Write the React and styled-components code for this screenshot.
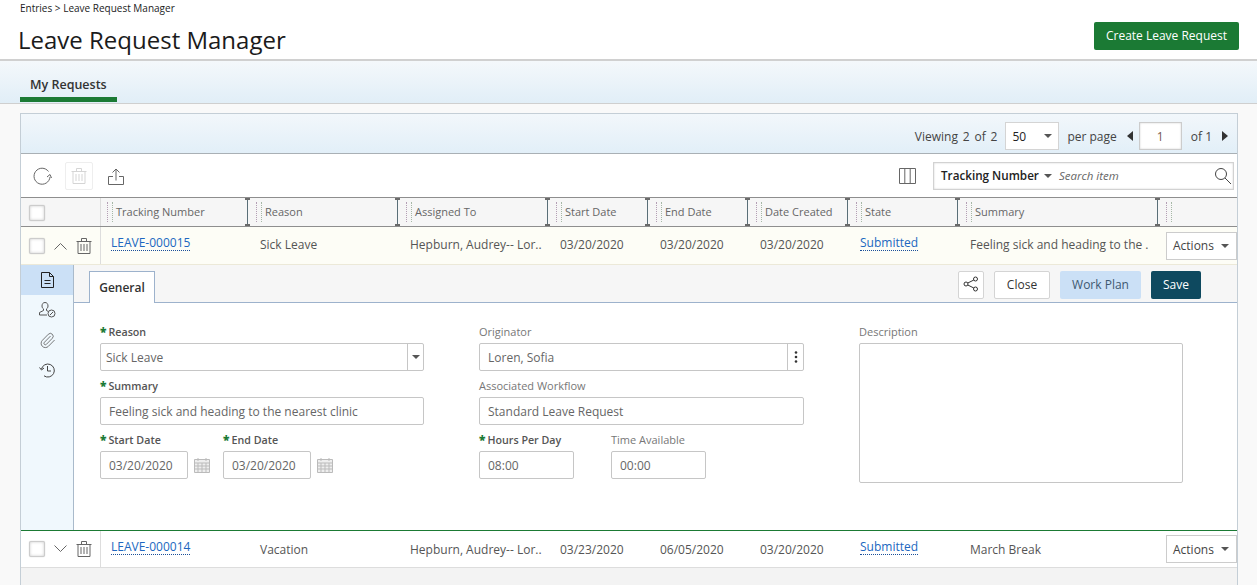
import React from 'react';
import styled, { createGlobalStyle } from 'styled-components';
import { Paperclip } from 'lucide-react';

const GlobalStyle = createGlobalStyle`
  html, body {
    margin: 0;
    height: 585px;
    overflow: hidden;
    background: #f9f9f9;
    font-family: "Open Sans", "Liberation Sans", sans-serif;
    color: #333;
  }
  * { box-sizing: border-box; }
`;

const COLUMNS = '80px 147px 150px 150px 100px 100px 100px 110px 200px 1fr';

const Header = styled.header`
  height: 61px;
  background: #fff;
  border-bottom: 2px solid #d0d0d0;
  padding: 0 18px 0 18px;
  display: flex;
  justify-content: space-between;
`;
const Crumbs = styled.div`
  font-size: 10px;
  line-height: 12px;
  padding: 2px 0 0 2px;
  color: #222;
`;
const Title = styled.h1`
  font-size: 24px;
  line-height: 33px;
  font-weight: 400;
  margin: 9px 0 0;
  color: #1b1b1b;
`;
const CreateButton = styled.button`
  height: 28px;
  width: 145px;
  margin-top: 22px;
  padding: 0 0 2px;
  background: #1b7a34;
  color: #fff;
  border: 0;
  border-radius: 2px;
  font: 400 12px "Open Sans", sans-serif;
`;
const TabBand = styled.nav`
  height: 43px;
  padding: 0 20px;
  background: linear-gradient(#f4f8fb, #e1eef7);
  border-bottom: 1px solid #cfcfcf;
`;
const Tab = styled.div`
  width: 97px;
  height: 41px;
  padding: 15px 0 0 10px;
  border-bottom: 5px solid #1b7a34;
  font-size: 12.5px;
  line-height: 17px;
  font-weight: 600;
  color: #333;
`;
const Panel = styled.section`
  margin: 9px 19px 0 20px;
  border: 1px solid #c4ced6;
  border-bottom: 0;
  background: #fff;
`;
const PagerBar = styled.div`
  height: 40px;
  padding: 5px 9px 0 0;
  background: linear-gradient(#f2f7fb, #e2eff8);
  border-bottom: 1px solid #a9b0b5;
  display: flex;
  align-items: center;
  justify-content: flex-end;
  font-size: 12px;
  color: #444;
`;
const PagerText = styled.span`
  word-spacing: ${({ $spread }) => $spread || 0}px;
  white-space: pre;
`;
const PageSize = styled.div`
  width: 54px;
  height: 28px;
  margin: 0 8px 0 8px;
  padding: 0 6px;
  background: #fff;
  border: 1px solid #d4d4d4;
  display: flex;
  align-items: center;
  justify-content: space-between;
  color: #222;
`;
const Caret = styled.i`
  width: 0;
  height: 0;
  display: block;
  margin: ${({ $margin }) => $margin || '0'};
  border-left: 4px solid transparent;
  border-right: 4px solid transparent;
  border-top: 4px solid #555;
`;
const Arrow = styled.i`
  width: 0;
  height: 0;
  display: block;
  margin: ${({ $margin }) => $margin || '0'};
  border-top: 5px solid transparent;
  border-bottom: 5px solid transparent;
  ${({ $left }) => ($left ? 'border-right: 6px solid #333;' : 'border-left: 6px solid #333;')}
`;
const PageInput = styled.div`
  width: 43px;
  height: 28px;
  margin: 0 9px 0 6px;
  background: #fff;
  border: 1px solid #ccc;
  box-shadow: inset 0 0 2px #ccc;
  display: flex;
  align-items: center;
  justify-content: center;
  color: #7a5a50;
`;
const Toolbar = styled.div`
  height: 43px;
  padding: 8px 3px 0 7px;
  display: flex;
  align-items: flex-start;
`;
const ToolIcon = styled.div`
  width: ${({ $width }) => $width || 28}px;
  height: 28px;
  margin-right: ${({ $gap }) => $gap || 0}px;
  display: flex;
  align-items: center;
  justify-content: center;
  ${({ $boxed }) => $boxed && 'border: 1px solid #eee; border-radius: 2px;'}
`;
const Spacer = styled.div`
  flex: 1;
`;
const SearchBox = styled.div`
  width: 301px;
  height: 28px;
  margin-left: 12px;
  padding: 0 1px 0 7px;
  border: 1px solid #d2d2d2;
  box-shadow: inset 0 0 2px #ccc;
  display: flex;
  align-items: center;
`;
const SearchField = styled.span`
  font-size: 11.7px;
  font-weight: 600;
  color: #222;
  margin-top: -2px;
`;
const SearchHint = styled.span`
  flex: 1;
  margin: -2px 0 0 7px;
  font-size: 11.5px;
  font-style: italic;
  color: #666;
`;
const HeadRow = styled.div`
  display: grid;
  grid-template-columns: ${COLUMNS};
  height: 30px;
  background: #f6f6f6;
  border-top: 1px solid #8e8e8e;
  border-bottom: 1px solid #8e8e8e;
`;
const HeadFirst = styled.div`
  padding: 7px 0 0 8px;
  border-right: 1px solid #ddd;
`;
const HeadCell = styled.div`
  position: relative;
  padding-left: 17px;
  font-size: 11px;
  line-height: 28px;
  color: #666;
  white-space: nowrap;
  &::before {
    content: '';
    position: absolute;
    left: 8px;
    top: 4px;
    bottom: 4px;
    width: 4px;
    border-left: 1px dotted #b49fb4;
    border-right: 1px dotted #a6b8a6;
  }
  &:nth-child(2) { padding-left: 15px; }
  &:nth-child(2)::before { left: 6px; }
`;
const Resizer = styled.span`
  position: absolute;
  right: 0;
  top: 0;
  bottom: 0;
  width: 1px;
  background: #5a6f78;
  &::before, &::after {
    content: '';
    position: absolute;
    left: -2px;
    width: 5px;
    height: 2px;
    background: #6a6a6a;
  }
  &::before { top: 0; }
  &::after { bottom: 0; }
`;
const Cell = styled.div`
  padding-left: ${({ $pad }) => $pad ?? 12}px;
  display: flex;
  align-items: center;
  white-space: nowrap;
  overflow: hidden;
`;
const TrackLink = styled.a`
  color: #2067c0;
  border-bottom: 1px dotted #1a4f99;
  line-height: 15px;
  margin-top: -4px;
`;
const Row = styled.div`
  display: grid;
  grid-template-columns: ${COLUMNS};
  height: ${({ $height }) => $height}px;
  background: ${({ $open }) => ($open ? '#fdfdf6' : '#fff')};
  border-bottom: 1px solid ${({ $open }) => ($open ? '#ece9d8' : '#ddd')};
  font-size: 12px;
  color: #555;
  ${Cell} {
    padding-bottom: ${({ $open }) => ($open ? 2 : 0)}px;
  }
  ${TrackLink} {
    margin-top: ${({ $open }) => ($open ? -4 : -5)}px;
  }
`;
const RowControls = styled.div`
  display: flex;
  align-items: center;
  padding-left: 8px;
  gap: 9px;
  border-right: 1px solid #ddd;
`;
const Check = styled.span`
  display: block;
  width: 16px;
  height: 16px;
  background: #fff;
  border: 1px solid #ccc;
  border-radius: 2px;
  box-shadow: inset 0 0 3px #ccc, 0 0 1px #bbb;
`;
const ActionCell = styled.div`
  display: flex;
  align-items: center;
  justify-content: flex-end;
`;
const ActionButton = styled.div`
  width: 71px;
  height: 28px;
  padding: 0 7px 0 6px;
  background: #fff;
  border: 1px solid #ccc;
  display: flex;
  align-items: center;
  justify-content: space-between;
  color: #444;
`;
const Detail = styled.div`
  display: flex;
  height: 266px;
  border-bottom: 1px solid #1b7a34;
`;
const SideRail = styled.aside`
  width: 53px;
  background: #f0f8fd;
  border-right: 1px solid #a9bacb;
`;
const RailItem = styled.div`
  height: 30px;
  display: flex;
  align-items: center;
  justify-content: center;
  background: ${({ $active }) => ($active ? '#cbe0f6' : 'transparent')};
`;
const DetailMain = styled.div`
  flex: 1;
  min-width: 0;
`;
const TabStrip = styled.div`
  height: 38px;
  padding: 6px 36px 0 15px;
  background: #f6f6f6;
  border-bottom: 1px solid #9db2cc;
  display: flex;
  gap: 10px;
`;
const DetailTab = styled.div`
  width: 66px;
  height: 32px;
  margin-right: auto;
  background: #fff;
  border: 1px solid #9db2cc;
  border-bottom: 0;
  text-align: center;
  font-size: 12px;
  font-weight: 600;
  line-height: 32px;
  color: #333;
`;
const FormButton = styled.button`
  height: 28px;
  width: ${({ $width }) => $width}px;
  padding: 0 0 2px;
  background: ${({ $bg }) => $bg || '#fff'};
  color: ${({ $fg }) => $fg || '#333'};
  border: ${({ $bg }) => ($bg ? '0' : '1px solid #d4d4d4')};
  border-radius: 2px;
  font: 400 12px "Open Sans", sans-serif;
  display: flex;
  align-items: center;
  justify-content: center;
`;
const Form = styled.div`
  padding: 21px 0 0 26px;
  display: grid;
  grid-template-columns: 324px 325px 324px;
  column-gap: 55px;
`;
const FormColumn = styled.div`
  display: flex;
  flex-direction: column;
`;
const Field = styled.div`
  width: ${({ $width }) => ($width ? `${$width}px` : 'auto')};
  margin-bottom: 7px;
`;
const FieldRow = styled.div`
  display: flex;
  gap: ${({ $gap }) => $gap}px;
`;
const Label = styled.label`
  display: block;
  height: 19px;
  font-size: ${({ $required }) => ($required ? 10.7 : 11)}px;
  line-height: 16px;
  white-space: nowrap;
  color: ${({ $required }) => ($required ? '#555' : '#777')};
  font-weight: ${({ $required }) => ($required ? 600 : 400)};
`;
const Star = styled.b`
  color: #1b7a34;
  font-size: 12px;
  margin-right: 2px;
`;
const Input = styled.div`
  width: ${({ $width }) => ($width ? `${$width}px` : '100%')};
  height: ${({ $height }) => $height || 28}px;
  padding-left: ${({ $pad }) => $pad || 8}px;
  background: #fff;
  border: 1px solid #c6c6c6;
  border-radius: 2px;
  font-size: 12px;
  color: #666;
  display: flex;
  align-items: center;
`;
const InputText = styled.span`
  flex: 1;
`;
const InputAddon = styled.span`
  width: 16px;
  height: 100%;
  margin-left: auto;
  border-left: 1px solid #c6c6c6;
  display: flex;
  align-items: center;
  justify-content: center;
  color: #333;
`;
const DateWrap = styled.div`
  display: flex;
  align-items: center;
  gap: 6px;
`;
const Footer = styled.div`
  height: 20px;
  background: #f3f3f3;
`;

const stroke = { fill: 'none', stroke: '#666', strokeWidth: 1 };

const Trash = ({ color = '#666' }) => (
  <svg width="16" height="16" viewBox="0 0 16 16" fill="none" stroke={color}>
    <path d="M.5 3.500h15M5.500 3.500v-3h5v3M2 3.500v12h12v-12M5 6v7M8 6v7M11 6v7" />
  </svg>
);
const Refresh = () => (
  <svg width="20" height="20" viewBox="0 0 20 20" {...stroke}>
    <path d="M16.500 5.500A8 8 0 1 0 18 11" />
    <path d="M15 11l3-2.500 1.500 3.500" />
  </svg>
);
const Share = () => (
  <svg width="16" height="17" viewBox="0 0 16 17" {...stroke}>
    <path d="M5 8.500H.5v8h15v-8H11M8 12.500V1M4.500 4.500L8 1l3.500 3.500" />
  </svg>
);
const ColumnsIcon = () => (
  <svg width="17" height="16" viewBox="0 0 17 16" {...stroke}>
    <path d="M.5.500h16v15H.5zM5.800.500v15M11.200.500v15" />
  </svg>
);
const SearchIcon = () => (
  <svg width="18" height="18" viewBox="0 0 18 18" fill="none" stroke="#444">
    <circle cx="7" cy="7" r="5.500" />
    <path d="M11 11l6 6" />
  </svg>
);
const ChevUp = () => (
  <svg width="13" height="8" viewBox="0 0 13 8" {...stroke}>
    <path d="M.5 7.500L6.500 1.500l6 6" />
  </svg>
);
const ChevDown = () => (
  <svg width="13" height="8" viewBox="0 0 13 8" {...stroke}>
    <path d="M.5.500L6.500 6.500l6-6" />
  </svg>
);
const DocIcon = () => (
  <svg width="13" height="16" viewBox="0 0 13 16" fill="none" stroke="#222">
    <path d="M.5.500h8l4 4v11H.5zM8.500.500v4h4M3.500 8.500h6M3.500 11.500h6" />
  </svg>
);
const UserIcon = () => (
  <svg width="17" height="16" viewBox="0 0 17 16" fill="none" stroke="#555">
    <path d="M6 .500c2 0 3 1.500 3 3.500 0 1.500-.8 2.500-1.500 3v1.500l1.500.8M6 .500c-2 0-3 1.500-3 3.500 0 1.500.8 2.500 1.500 3v1.500L.5 10.500v2.500h7.500" />
    <circle cx="12.500" cy="11.500" r="3.500" />
    <path d="M11 13l3-3" />
  </svg>
);
const HistoryIcon = () => (
  <svg width="16" height="16" viewBox="0 0 16 16" fill="none" stroke="#444">
    <path d="M2.500 7A6.500 6.500 0 1 1 5 13.800M.5 5.500l2 2.500L5 6M8.500 4v5H12" />
  </svg>
);
const NetworkIcon = () => (
  <svg width="16" height="16" viewBox="0 0 16 16" fill="none" stroke="#333">
    <circle cx="3" cy="8" r="2" />
    <circle cx="12.500" cy="3" r="2" />
    <circle cx="12.500" cy="13" r="2" />
    <path d="M4.800 7l6-3M4.800 9l6 3" />
  </svg>
);
const CalendarIcon = () => (
  <svg width="16" height="16" viewBox="0 0 16 16" fill="#eee" stroke="#bbb">
    <path d="M.5 2.500h15v13H.5zM.5 6h15M.5 9h15M.5 12h15M4 6v9.500M8 6v9.500M12 6v9.500M4 1v3M12 1v3" />
  </svg>
);
const DotsIcon = () => (
  <svg width="4" height="14" viewBox="0 0 4 14" fill="#333">
    <circle cx="2" cy="2.500" r="1.300" />
    <circle cx="2" cy="7" r="1.300" />
    <circle cx="2" cy="11.500" r="1.300" />
  </svg>
);

const HEADS = ['Tracking Number', 'Reason', 'Assigned To', 'Start Date', 'End Date', 'Date Created', 'State', 'Summary'];

const RequestRow = ({ open, height, id, reason, start, end, summary }) => (
  <Row $open={open} $height={height}>
    <RowControls>
      <Check />
      {open ? <ChevUp /> : <ChevDown />}
      <Trash />
    </RowControls>
    <Cell $pad={10}>
      <TrackLink>{id}</TrackLink>
    </Cell>
    <Cell>{reason}</Cell>
    <Cell>Hepburn, Audrey-- Lor..</Cell>
    <Cell>{start}</Cell>
    <Cell>{end}</Cell>
    <Cell>03/20/2020</Cell>
    <Cell>
      <TrackLink>Submitted</TrackLink>
    </Cell>
    <Cell>{summary}</Cell>
    <ActionCell>
      <ActionButton>
        Actions
        <Caret />
      </ActionButton>
    </ActionCell>
  </Row>
);

const FormField = ({ label, required, width, children }) => (
  <Field $width={width}>
    <Label $required={required}>
      {required && <Star>*</Star>}
      {label}
    </Label>
    {children}
  </Field>
);

const DateField = ({ label }) => (
  <FormField label={label} required>
    <DateWrap>
      <Input $width={88}>03/20/2020</Input>
      <CalendarIcon />
    </DateWrap>
  </FormField>
);

export default function App() {
  return (
    <>
      <GlobalStyle />
      <Header>
        <div>
          <Crumbs>Entries &gt; Leave Request Manager</Crumbs>
          <Title>Leave Request Manager</Title>
        </div>
        <CreateButton>Create Leave Request</CreateButton>
      </Header>
      <TabBand>
        <Tab>My Requests</Tab>
      </TabBand>
      <Panel>
        <PagerBar>
          <PagerText $spread={1.7}>Viewing 2 of 2</PagerText>
          <PageSize>
            50
            <Caret />
          </PageSize>
          <PagerText>per page</PagerText>
          <Arrow $left $margin="0 0 0 10px" />
          <PageInput>1</PageInput>
          <PagerText>of 1</PagerText>
          <Arrow $margin="0 0 0 10px" />
        </PagerBar>
        <Toolbar>
          <ToolIcon $gap={9}><Refresh /></ToolIcon>
          <ToolIcon $boxed $gap={9}><Trash color="#d5d5d5" /></ToolIcon>
          <ToolIcon><Share /></ToolIcon>
          <Spacer />
          <ToolIcon><ColumnsIcon /></ToolIcon>
          <SearchBox>
            <SearchField>Tracking Number</SearchField>
            <Caret $margin="0 0 0 5px" />
            <SearchHint>Search item</SearchHint>
            <SearchIcon />
          </SearchBox>
        </Toolbar>
        <HeadRow>
          <HeadFirst><Check /></HeadFirst>
          {HEADS.map((h) => (
            <HeadCell key={h}>
              {h}
              <Resizer />
            </HeadCell>
          ))}
          <HeadCell />
        </HeadRow>
        <RequestRow
          open
          height={38}
          id="LEAVE-000015"
          reason="Sick Leave"
          start="03/20/2020"
          end="03/20/2020"
          summary="Feeling sick and heading to the ."
        />
        <Detail>
          <SideRail>
            <RailItem $active><DocIcon /></RailItem>
            <RailItem><UserIcon /></RailItem>
            <RailItem><Paperclip size={17} strokeWidth={1.1} color="#555" /></RailItem>
            <RailItem><HistoryIcon /></RailItem>
          </SideRail>
          <DetailMain>
            <TabStrip>
              <DetailTab>General</DetailTab>
              <FormButton $width={26}><NetworkIcon /></FormButton>
              <FormButton $width={56}>Close</FormButton>
              <FormButton $width={81} $bg="#cbe0f6" $fg="#3d5870">Work Plan</FormButton>
              <FormButton $width={50} $bg="#0e495f" $fg="#fff">Save</FormButton>
            </TabStrip>
            <Form>
              <FormColumn>
                <FormField label="Reason" required>
                  <Input $pad={5}>
                    <InputText>Sick Leave</InputText>
                    <InputAddon><Caret /></InputAddon>
                  </Input>
                </FormField>
                <FormField label="Summary" required>
                  <Input>Feeling sick and heading to the nearest clinic</Input>
                </FormField>
                <FieldRow $gap={13}>
                  <DateField label="Start Date" />
                  <DateField label="End Date" />
                </FieldRow>
              </FormColumn>
              <FormColumn>
                <FormField label="Originator">
                  <Input>
                    <InputText>Loren, Sofia</InputText>
                    <InputAddon><DotsIcon /></InputAddon>
                  </Input>
                </FormField>
                <FormField label="Associated Workflow">
                  <Input>Standard Leave Request</Input>
                </FormField>
                <FieldRow $gap={37}>
                  <FormField label="Hours Per Day" required>
                    <Input $width={95}>08:00</Input>
                  </FormField>
                  <FormField label="Time Available">
                    <Input $width={95}>00:00</Input>
                  </FormField>
                </FieldRow>
              </FormColumn>
              <FormColumn>
                <FormField label="Description">
                  <Input $height={140} />
                </FormField>
              </FormColumn>
            </Form>
          </DetailMain>
        </Detail>
        <RequestRow
          height={37}
          id="LEAVE-000014"
          reason="Vacation"
          start="03/23/2020"
          end="06/05/2020"
          summary="March Break"
        />
        <Footer />
      </Panel>
    </>
  );
}
